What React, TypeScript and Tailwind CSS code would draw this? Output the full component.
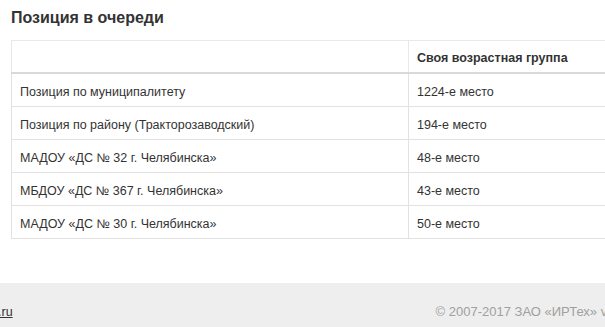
const rows = [
  { name: "Позиция по муниципалитету", place: "1224-е место" },
  { name: "Позиция по району (Тракторозаводский)", place: "194-е место" },
  { name: "МАДОУ «ДС № 32 г. Челябинска»", place: "48-е место" },
  { name: "МБДОУ «ДС № 367 г. Челябинска»", place: "43-е место" },
  { name: "МАДОУ «ДС № 30 г. Челябинска»", place: "50-е место" },
];

export default function App() {
  return (
    <div
      className="w-[605px] h-[327px] overflow-hidden bg-white text-[#333] flex flex-col"
      style={{ fontFamily: '"Liberation Sans", Arial, sans-serif' }}
    >
      <div className="flex-1 pl-[11px]">
        {/* заголовок */}
        <h2 className="text-[16px] font-bold leading-[20px] pt-[8px] mb-[12px]">
          Позиция в очереди
        </h2>

        {/* таблица позиций */}
        <table className="w-[800px] border-collapse text-[12.5px] leading-[16px] border border-[#e2e2e2]">
          <thead>
            <tr>
              <th className="w-[397px] px-[8px] pt-[9px] pb-[6px] border border-[#e8e8e8] border-b-2 border-b-[#d9d9d9]"></th>
              <th className="text-left font-bold px-[8px] pt-[9px] pb-[6px] border border-[#e8e8e8] border-b-2 border-b-[#d9d9d9]">
                Своя возрастная группа
              </th>
            </tr>
          </thead>
          <tbody>
            {rows.map((row) => (
              <tr key={row.name}>
                <td className="px-[8px] pt-[10px] pb-[6px] border border-[#e2e2e2]">{row.name}</td>
                <td className="px-[8px] pt-[10px] pb-[6px] border border-[#e2e2e2]">{row.place}</td>
              </tr>
            ))}
          </tbody>
        </table>
      </div>

      {/* подвал */}
      <div className="h-[44px] shrink-0 bg-[#eeeeee] flex items-start pt-[21px] text-[13px] leading-[16px] whitespace-nowrap">
        <a className="underline text-[#333] ml-[-2px] text-[12.5px]">.ru</a>
        <span className="ml-[423px] text-[#a0a0a0] text-[13px]">© 2007-2017 ЗАО «ИРТех» v1.0</span>
      </div>
    </div>
  );
}
